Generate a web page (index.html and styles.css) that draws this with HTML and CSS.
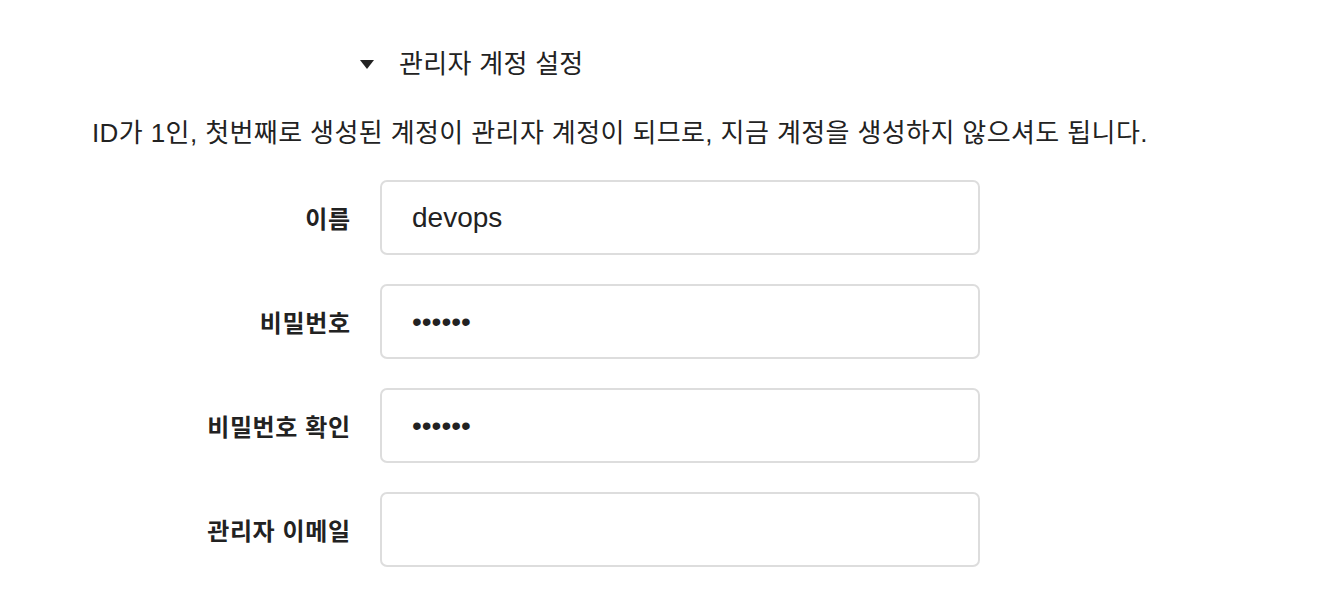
FILE: index.html
```html
<!DOCTYPE html>
<html lang="ko">
<head>
    <meta charset="UTF-8">
    <title>관리자 계정 설정</title>
    <link rel="stylesheet" href="styles.css">
</head>
<body>
    <details class="admin-setup" open>
        <summary>관리자 계정 설정</summary>
        <p class="notice">ID가 1인, 첫번째로 생성된 계정이 관리자 계정이 되므로, 지금 계정을 생성하지 않으셔도 됩니다.</p>
        <form class="admin-form">
            <div class="row">
                <label for="name">이름</label>
                <input type="text" id="name" value="devops">
            </div>
            <div class="row">
                <label for="password">비밀번호</label>
                <input type="password" id="password" value="123456">
            </div>
            <div class="row">
                <label for="password2">비밀번호 확인</label>
                <input type="password" id="password2" value="123456">
            </div>
            <div class="row">
                <label for="email">관리자 이메일</label>
                <input type="email" id="email">
            </div>
        </form>
    </details>
</body>
</html>
```
FILE: styles.css
```css
body {
    margin: 0;
    font-family: "Liberation Sans", "Noto Sans CJK KR", sans-serif;
    color: #222;
    background: #fff;
}
.admin-setup {
    padding: 46px 0 0 92px;
}
.admin-setup summary {
    margin-left: 268px;
    font-size: 26px;
    line-height: 36px;
    letter-spacing: 0.3px;
    cursor: pointer;
    list-style: none;
    display: flex;
    align-items: center;
}
.admin-setup summary::before {
    content: "";
    width: 0;
    height: 0;
    border-left: 7.5px solid transparent;
    border-right: 7.5px solid transparent;
    border-top: 9px solid #222;
    margin-right: 25px;
}
.notice {
    margin: 35px 0 0;
    font-size: 26px;
    line-height: 32px;
    letter-spacing: 0.4px;
}
.admin-form {
    margin-top: 31px;
    display: flex;
    flex-direction: column;
    gap: 29px;
}
.row {
    display: grid;
    grid-template-columns: 258px 600px;
    column-gap: 30px;
    align-items: center;
}
.row label {
    text-align: right;
    font-weight: bold;
    font-size: 24px;
    letter-spacing: 0.6px;
    margin-right: -0.6px;
}
.row input {
    box-sizing: border-box;
    height: 75px;
    padding: 0 30px;
    border: 2px solid #ddd;
    border-radius: 7px;
    font-family: "Liberation Sans", sans-serif;
    font-size: 28px;
    color: #222;
    outline: none;
}
```
